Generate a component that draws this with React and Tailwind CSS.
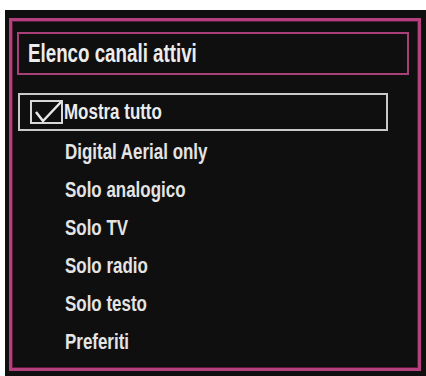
import React from "react";

const font = { fontFamily: '"Liberation Sans", Arial, sans-serif' };

const items = [
  "Digital Aerial only",
  "Solo analogico",
  "Solo TV",
  "Solo radio",
  "Solo testo",
  "Preferiti",
];

export default function App() {
  return (
    <div className="w-[426px] h-[376px] bg-white pt-[10px] pl-[5px] flex overflow-hidden" style={font}>
      <div className="flex-1 bg-[#0f0f0f] pt-[8px] pl-[4px] pr-[5px] pb-[5px] flex">
        <div className="flex-1 border-[3px] border-[#b4407e] shadow-[inset_0_0_0_1px_#5a1a3c] pl-[5px] pr-[9px] pt-[11px] flex flex-col">
          <div className="h-[43px] border-2 border-[#a93f78] flex items-center pl-[9px]">
            <span className="inline-block origin-left scale-x-[0.75] whitespace-nowrap text-[25px] font-bold text-[#ececec] leading-none">Elenco canali attivi</span>
          </div>
          <div className="mt-[18px] w-[370px] ml-px h-[38px] border-2 border-[#c9c9c9] flex items-center pl-[10px]">
            <svg width="33" height="24" viewBox="0 0 33 24" className="shrink-0">
              <rect x="1" y="1" width="31" height="22" fill="none" stroke="#d8d8d8" strokeWidth="2" />
              <path d="M6 12 L13 21 L31 2" fill="none" stroke="#e8e8e8" strokeWidth="2.5" strokeLinejoin="round" />
            </svg>
            <span className="ml-[1px] inline-block origin-left scale-x-[0.77] whitespace-nowrap text-[22px] font-bold text-[#ececec] leading-none">Mostra tutto</span>
          </div>
          <div className="flex flex-col pt-[2px]">
            {items.map((t) => (
              <div key={t} className="h-[38px] flex items-center pl-[48px]">
                <span className="inline-block origin-left scale-x-[0.77] whitespace-nowrap text-[22px] font-bold text-[#e4e4e4] leading-none">{t}</span>
              </div>
            ))}
          </div>
        </div>
      </div>
    </div>
  );
}
